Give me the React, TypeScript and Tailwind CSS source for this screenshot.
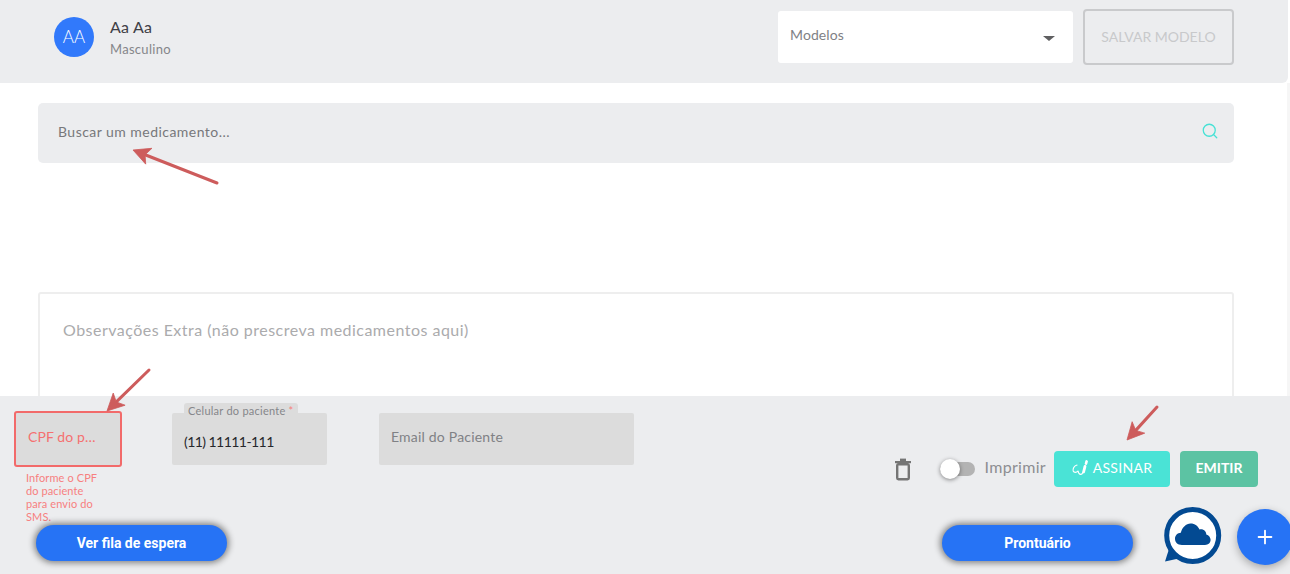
import React from "react";
import { Search, Plus } from "lucide-react";

const raleway = "font-['Lato','Noto_Sans',sans-serif]";
const roboto = "font-['Roboto',sans-serif]";

function Arrow({ x1, y1, x2, y2 }: { x1: number; y1: number; x2: number; y2: number }) {
  const a = Math.atan2(y2 - y1, x2 - x1);
  const len = 17;
  const w = 8.5;
  const bx = x2 - Math.cos(a) * len;
  const by = y2 - Math.sin(a) * len;
  const nx = Math.cos(a + Math.PI / 2) * w;
  const ny = Math.sin(a + Math.PI / 2) * w;
  const ix = x2 - Math.cos(a) * (len - 4);
  const iy = y2 - Math.sin(a) * (len - 4);
  return (
    <g fill="#cd5c5c" stroke="#cd5c5c">
      <line x1={x1} y1={y1} x2={ix} y2={iy} strokeWidth="3" strokeLinecap="round" />
      <polygon points={`${x2},${y2} ${bx + nx},${by + ny} ${ix},${iy} ${bx - nx},${by - ny}`} strokeWidth="0.8" />
    </g>
  );
}

function TrashIcon() {
  return (
    <svg width="18" height="23" viewBox="0 0 18 23" fill="none">
      <rect x="3.2" y="6.2" width="11.6" height="15" rx="1.2" stroke="#757575" strokeWidth="2.4" />
      <rect x="1" y="3" width="16" height="2.2" fill="#757575" />
      <rect x="6" y="0.6" width="6" height="2.6" fill="#757575" />
    </svg>
  );
}

function SignIcon() {
  return (
    <svg width="17" height="16" viewBox="0 0 17 16" fill="none" stroke="white" strokeLinecap="round">
      <path d="M5 5 C2 5.5 0.6 9 1.2 11 C2 13 4.5 12.8 6 11.2" strokeWidth="1.2" />
      <path d="M6 11.2 C6.4 13 7.6 14.6 9 14.4 C10.2 14.2 10.6 13.4 10.8 12.4" strokeWidth="1.1" />
      <path d="M13 6.4 L11.6 12" strokeWidth="2.8" />
      <path d="M14.6 1.4 L14 3.6" strokeWidth="2.6" />
    </svg>
  );
}

function CloudChat() {
  return (
    <svg width="58" height="58" viewBox="0 0 58 58">
      <path d="M5 42 L1 54.5 L17 51 Z" fill="#034a92" />
      <circle cx="28.7" cy="28.5" r="26" fill="white" stroke="#034a92" strokeWidth="5" />
      <path d="M18 38 C13.5 38 11 35.2 11 31.8 C11 28.5 13.5 26 16.8 25.8 C18 20.5 22.2 16.5 26.5 16.5 C31 16.5 34 19 35.5 22.6 C37 22 39.5 22.3 41 24 C42 25.2 42.3 26.5 42.3 27.4 C44.8 28 46.6 30.4 46.6 32.8 C46.6 35.8 44.4 38 41 38 Z" fill="#034a92" />
    </svg>
  );
}

function PillButton({ children, className }: { children: React.ReactNode; className: string }) {
  return (
    <button className={`h-9 w-[191px] rounded-[18px] bg-[#2673f5] text-[14px] font-bold text-white shadow-[0_0_6px_2px_rgba(0,0,0,0.45)] ${roboto} ${className}`}>
      {children}
    </button>
  );
}

export default function App() {
  return (
    <div className={`relative flex h-[574px] w-[1290px] flex-col overflow-hidden bg-white ${raleway}`}>
      <header className="flex h-[83px] w-[1288px] shrink-0 items-start rounded-br-md bg-[#ecedef] pl-[54px] pr-[54px]">
        <div className="mt-[17px] flex h-10 w-10 items-center justify-center rounded-full bg-[#3179fb] text-[17px] font-light text-white">AA</div>
        <div className="ml-4 mt-4">
          <div className="text-[16px] leading-[21px] tracking-[0.2px] text-[#3f4046]">Aa Aa</div>
          <div className="mt-[2px] text-[13px] leading-[20px] tracking-[0.3px] text-[#85868a]">Masculino</div>
        </div>
        <div className="ml-auto mt-[11px] flex h-[52px] w-[295px] items-start justify-between rounded-[3px] bg-white pl-3 pr-[18px] pt-[14px]">
          <span className="text-[14px] leading-[20px] tracking-[0.1px] text-[#808185]">Modelos</span>
          <span className="mt-[11px] h-0 w-0 border-x-[6px] border-t-[5px] border-x-transparent border-t-[#5f5f61]" />
        </div>
        <button className="ml-[10px] mt-[9px] h-[56px] w-[151px] rounded-[4px] border-2 border-[#c9cacc] pb-[2px] text-[14px] text-[#c8c9cb]">SALVAR MODELO</button>
      </header>

      <main className="flex flex-1 flex-col overflow-hidden border-r-[3px] border-[#f6f6f6] pl-[38px] pr-[53px] pt-5">
        <div className="flex h-[60px] shrink-0 items-center justify-between rounded-[5px] bg-[#ecedef] pb-1 pl-5 pr-[15px]">
          <span className="text-[14px] tracking-[0.46px] text-[#77787b]">Buscar um medicamento...</span>
          <Search size={18} strokeWidth={1.7} color="#46e1d5" />
        </div>
        <div className="mt-[129px] h-[200px] shrink-0 rounded-[3px] border-2 border-[#eeeeee] pl-[23px] pt-6 text-[16px] leading-[24px] tracking-[0.48px] text-[#ababad]">
          Observações Extra (não prescreva medicamentos aqui)
        </div>
      </main>

      <footer className="flex h-[178px] shrink-0 flex-col bg-[#ecedef]">
        <div className="flex h-[111px] shrink-0 items-start pl-[14px]">
          <div className="w-[108px] pt-[15px]">
            <div className="flex h-[56px] items-center rounded-[3px] border-2 border-[#f26a6a] bg-[#dcdcdc] pb-[5px] pl-3 text-[14px] tracking-[0.1px] text-[#f57070]">CPF do p…</div>
            <p className="ml-3 mt-1 w-[80px] text-[11px] leading-[13px] tracking-[0.1px] text-[#f78080]">Informe o CPF do paciente para envio do SMS.</p>
          </div>
          <div className="relative ml-[50px] mt-[17px] flex h-[52px] w-[155px] items-center rounded-[2px] bg-[#dcdcdc] pl-3 pt-[5px] text-[14px] tracking-[-0.55px] text-[#26272b]">
            <span>(11) 11111-111</span>
            <span className="absolute left-3 top-[-10px] rounded-t-[3px] bg-[#dcdcdc] px-1 text-[11px] leading-[15px] tracking-[0.25px] text-[#85868a]">Celular do paciente <span className="text-[#f78080]">*</span></span>
          </div>
          <div className="ml-[52px] mt-[17px] flex h-[52px] w-[255px] items-center rounded-[2px] bg-[#dcdcdc] pb-[5px] pl-3 text-[14px] tracking-[0.2px] text-[#808185]">Email do Paciente</div>

          <div className="ml-auto mr-[32px] mt-[55px] flex h-9 items-center">
            <TrashIcon />
            <div className="relative ml-[28px] h-[14px] w-[35px] rounded-full bg-[#b3b3b3]">
              <span className="absolute left-0 top-[-3px] h-5 w-5 rounded-full bg-white shadow-[0_1px_4px_rgba(0,0,0,0.45)]" />
            </div>
            <span className="ml-[10px] pb-1 text-[16px] tracking-[0.3px] text-[#8d8e92]">Imprimir</span>
            <button className="ml-2 flex h-9 w-[116px] items-center justify-center gap-1 rounded-[4px] bg-[#4ae3d6] pb-[3px] text-[14px] tracking-[0.3px] text-white">
              <SignIcon />
              ASSINAR
            </button>
            <button className="ml-[10px] h-9 w-[78px] rounded-[4px] bg-[#5cc3a3] pb-[3px] text-[14px] font-bold text-white">EMITIR</button>
          </div>
        </div>

        <div className="flex flex-1 items-start pl-[36px]">
          <PillButton className="mt-[18px]">Ver fila de espera</PillButton>
          <PillButton className="ml-auto mt-[18px]">Prontuário</PillButton>
          <div className="ml-[31px] shrink-0"><CloudChat /></div>
          <div className="ml-[15px] mr-[-3px] mt-[2px] flex h-14 w-14 shrink-0 items-center justify-center rounded-full bg-[#2673f5] text-white shadow-[0_3px_8px_rgba(0,0,0,0.3)]">
            <Plus size={22} strokeWidth={2} />
          </div>
        </div>
      </footer>

      <svg className="pointer-events-none absolute left-0 top-0" width="1290" height="574">
        <Arrow x1={217} y1={183} x2={133} y2={150} />
        <Arrow x1={149} y1={370} x2={107} y2={411} />
        <Arrow x1={1157} y1={407} x2={1127} y2={440} />
      </svg>
    </div>
  );
}
